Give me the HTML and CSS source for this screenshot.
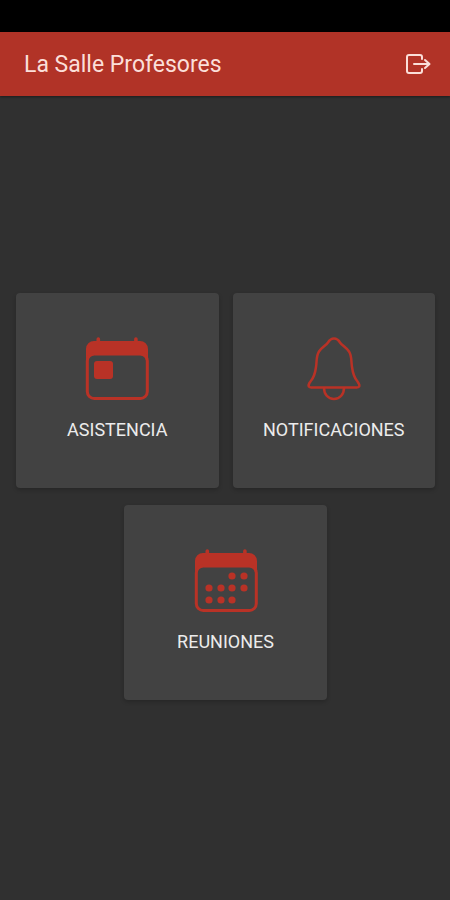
FILE: index.html
```html
<!DOCTYPE html>
<html lang="es">
  <head>
    <meta charset="UTF-8" />
    <meta name="viewport" content="width=device-width, initial-scale=1.0" />
    <title>La Salle Profesores</title>
    <link rel="stylesheet" href="styles.css">
  </head>
  <body>
    <div class="status-bar"></div>
    <header class="toolbar">
      <h1 class="title">La Salle Profesores</h1>
      <button class="logout" type="button" aria-label="Salir">
        <svg width="26" height="22" viewBox="0 0 26 22">
          <path d="M17 6V4a2 2 0 0 0-2-2H4a2 2 0 0 0-2 2v14a2 2 0 0 0 2 2h11a2 2 0 0 0 2-2v-2M9 11h15M20 7l4.500 4L20 15" />
        </svg>
      </button>
    </header>

    <main class="menu">
      <a class="card" href="#asistencia">
        <svg class="icon" viewBox="0 0 64 64">
          <path class="fill" d="M9 4h2.500V2a1.700 1.700 0 0 1 3.600 0v2h34V2a1.700 1.700 0 0 1 3.600 0v2h2.300a8 8 0 0 1 8 8v11H1V12a8 8 0 0 1 8-8z" />
          <rect class="hole" x="3" y="18" width="58" height="42" rx="6" />
          <rect class="line" x="2.300" y="17" width="60" height="44.500" rx="7" />
          <rect class="fill" x="9" y="24" width="19" height="18" rx="3" />
        </svg>
        <span>ASISTENCIA</span>
      </a>

      <a class="card" href="#notificaciones">
        <svg class="icon" viewBox="0 0 64 64">
          <path class="line thin" d="M32 1.500c-3 0-4.500 1.500-6 4C24 8.500 20 10 17 14.500 14 19 15 24 14 30c-.8 6.500-2.500 11-5.500 14.500C6.500 47 6 48 6.800 49.500c.5.600 1.200 1 2.500 1h45.400c1.300 0 2-.4 2.500-1 .8-1.500 0-2.500-1.700-5C52.500 41 50.800 36.500 50 30c-1-6 0-11-3-15.500C44 10 40 8.500 38 5.500c-1.500-2.500-3-4-6-4z" />
          <path class="line thin" d="M22 51c0 6 4 11 10 11s10-5 10-11" />
        </svg>
        <span>NOTIFICACIONES</span>
      </a>

      <a class="card" href="#reuniones">
        <svg class="icon" viewBox="0 0 64 64">
          <path class="fill" d="M9 4h2.500V2a1.700 1.700 0 0 1 3.600 0v2h34V2a1.700 1.700 0 0 1 3.600 0v2h2.300a8 8 0 0 1 8 8v11H1V12a8 8 0 0 1 8-8z" />
          <rect class="hole" x="3" y="18" width="58" height="42" rx="6" />
          <rect class="line" x="2.300" y="17" width="60" height="44.500" rx="7" />
          <g class="fill">
            <circle cx="38" cy="27" r="3.600" />
            <circle cx="50" cy="27" r="3.600" />
            <circle cx="15" cy="39" r="3.600" />
            <circle cx="27" cy="39" r="3.600" />
            <circle cx="38" cy="39" r="3.600" />
            <circle cx="50" cy="39" r="3.600" />
            <circle cx="15" cy="51" r="3.600" />
            <circle cx="27" cy="51" r="3.600" />
            <circle cx="38" cy="51" r="3.600" />
          </g>
        </svg>
        <span>REUNIONES</span>
      </a>
    </main>
  </body>
</html>
```

FILE: styles.css
```css
* {
  box-sizing: border-box;
}
body {
  margin: 0;
  min-height: 100vh;
  display: flex;
  flex-direction: column;
  background: #303030;
  font-family: Roboto, sans-serif;
}
.status-bar {
  height: 32px;
  background: #000;
}
.toolbar {
  display: flex;
  align-items: center;
  justify-content: space-between;
  height: 64px;
  padding: 0 19px 0 24px;
  background: #b13327;
  box-shadow: 0 1px 2px rgba(0, 0, 0, 0.4);
}
.title {
  margin: 0;
  color: #fbdfd9;
  font-size: 23px;
  font-weight: 400;
}
.logout {
  display: flex;
  padding: 0;
  border: 0;
  background: none;
  cursor: pointer;
}
.logout svg {
  fill: none;
  stroke: #fbdfd9;
  stroke-width: 2;
  stroke-linecap: round;
  stroke-linejoin: round;
}
.menu {
  flex: 1;
  display: flex;
  flex-wrap: wrap;
  justify-content: center;
  align-content: center;
  gap: 17px 14px;
  padding: 0 15px 3px 16px;
}
.card {
  width: calc(50% - 7px);
  display: flex;
  flex-direction: column;
  align-items: center;
  gap: 18px;
  padding: 44px 0 47px;
  border-radius: 4px;
  background: #424242;
  box-shadow: 0 2px 4px rgba(0, 0, 0, 0.2);
  color: #ececec;
  font-size: 18px;
  line-height: 22px;
  text-decoration: none;
}
.icon {
  width: 64px;
  height: 64px;
}
.fill {
  fill: #b93226;
}
.hole {
  fill: #424242;
}
.line {
  fill: none;
  stroke: #b93226;
  stroke-width: 3;
  stroke-linejoin: round;
}
.thin {
  stroke-width: 2.5;
}
```
